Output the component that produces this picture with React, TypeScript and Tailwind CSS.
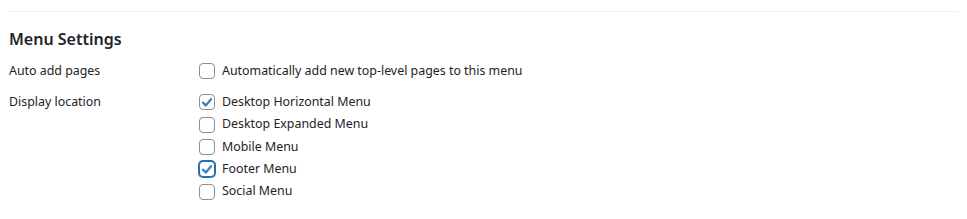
const font = { fontFamily: '"Noto Sans", "Open Sans", sans-serif' }

type Opt = { label: string; checked?: boolean; focused?: boolean }

const locations: Opt[] = [
  { label: "Desktop Horizontal Menu", checked: true },
  { label: "Desktop Expanded Menu" },
  { label: "Mobile Menu" },
  { label: "Footer Menu", checked: true, focused: true },
  { label: "Social Menu" },
]

function Box({ checked, focused }: { checked?: boolean; focused?: boolean }) {
  return (
    <span
      className={
        focused
          ? "flex h-4 w-4 shrink-0 items-center justify-center rounded-[4px] border border-[#2271b1] bg-white shadow-[0_0_0_1px_#2271b1]"
          : "flex h-4 w-4 shrink-0 items-center justify-center rounded-[4px] border border-[#8c8f94] bg-white"
      }
    >
      {checked && (
        <svg viewBox="0 0 16 16" className="h-[15px] w-[15px]">
          <path d="M3.4 8.2 L6.6 11.4 L12.6 4.2" fill="none" stroke="#3582c4" strokeWidth="2.6" strokeLinecap="round" strokeLinejoin="round" />
        </svg>
      )}
    </span>
  )
}

function Row({ label, checked, focused }: Opt) {
  return (
    <label className="flex h-[22.3px] items-center gap-[7px]">
      <Box checked={checked} focused={focused} />
      <span>{label}</span>
    </label>
  )
}

export default function App() {
  return (
    <div className="h-[219px] w-[967px] bg-white px-[9px] pt-[11px] text-[12.4px] text-[#1d2327]" style={font}>
      <div className="border-t border-[#f0f0f1]" />
      <h2 className="mt-[16px] text-[16px] font-semibold leading-[22px]">Menu Settings</h2>

      <div className="mt-[10px] grid grid-cols-[190px_1fr]">
        <div className="leading-[22px]">Auto add pages</div>
        <div>
          <Row label="Automatically add new top-level pages to this menu" />
        </div>
      </div>

      <div className="mt-[9px] grid grid-cols-[190px_1fr]">
        <div className="leading-[22px]">Display location</div>
        <div className="flex flex-col">
          {locations.map(o => (
            <Row key={o.label} {...o} />
          ))}
        </div>
      </div>
    </div>
  )
}
